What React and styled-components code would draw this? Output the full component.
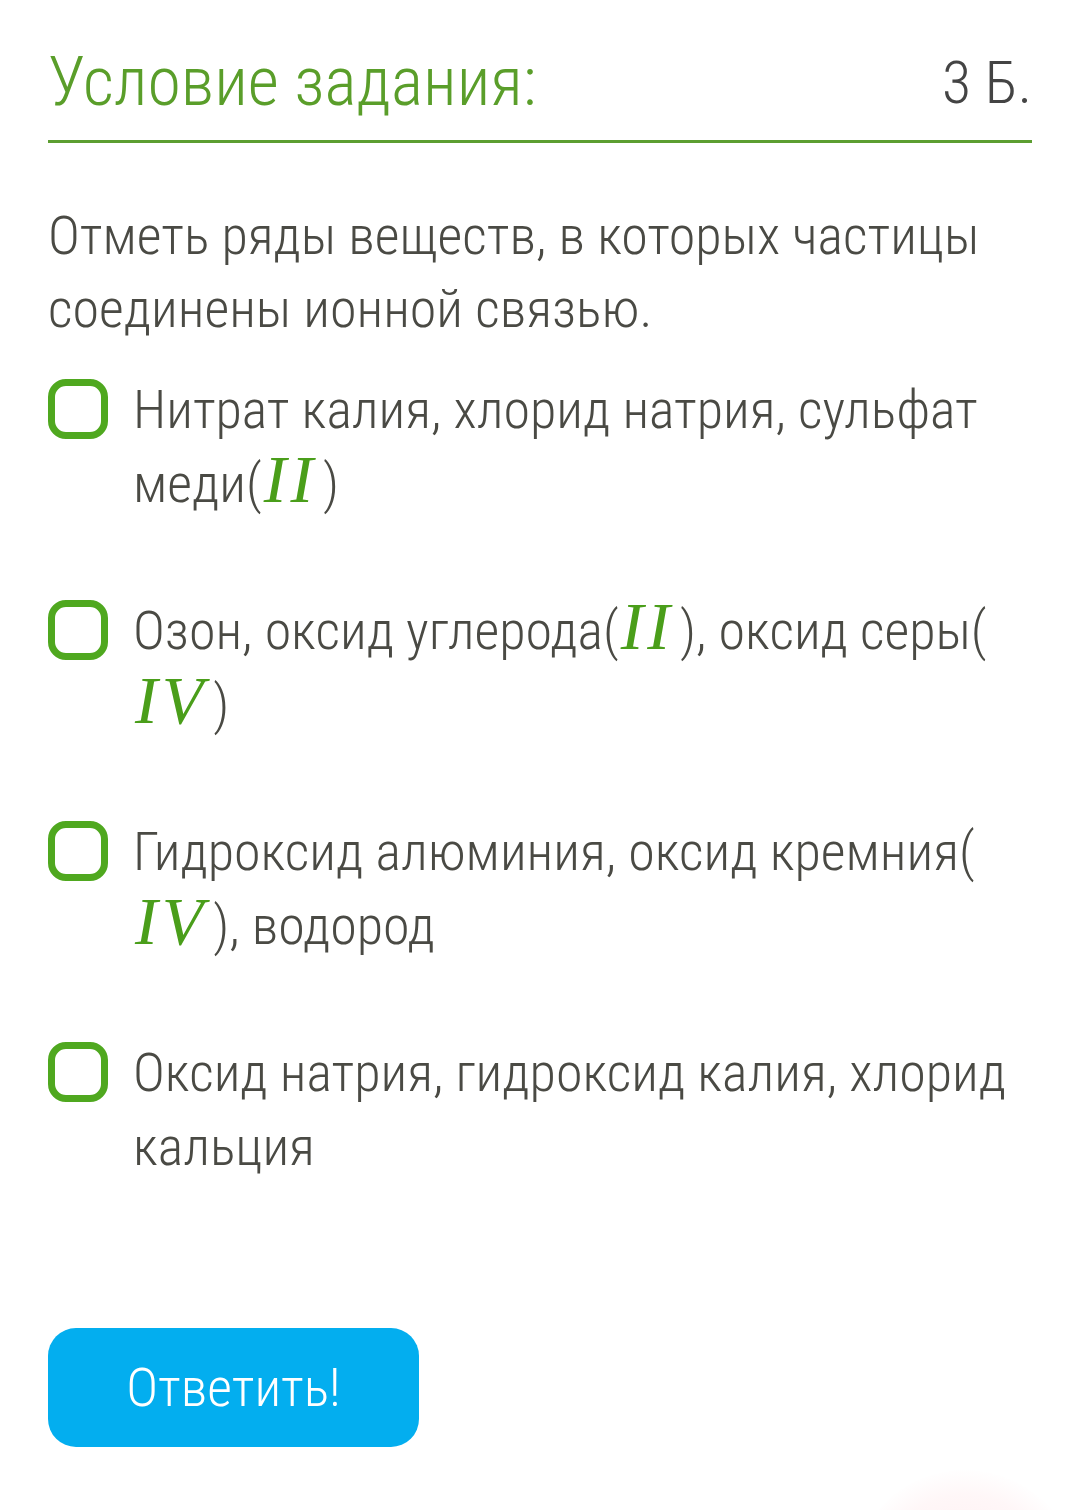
import React, { useState } from 'react';
import styled, { createGlobalStyle } from 'styled-components';

const GlobalStyle = createGlobalStyle`
  html, body {
    margin: 0;
    padding: 0;
    background: #fff;
  }
  body {
    font-family: 'Roboto Condensed', Roboto, 'Liberation Sans Narrow', sans-serif;
    font-weight: 300;
    color: #4a4a44;
    overflow: hidden;
  }
`;

const Page = styled.div`
  position: relative;
  width: 1080px;
  height: 1510px;
  padding: 0 48px;
  box-sizing: border-box;
  overflow: hidden;
`;

const Header = styled.div`
  display: flex;
  justify-content: space-between;
  align-items: center;
  height: 143px;
  padding-top: 24px;
  border-bottom: 3px solid #5c9e31;
  box-sizing: border-box;
`;

const Title = styled.h1`
  margin: 0;
  font-size: 68px;
  font-weight: 300;
  color: #5a9e2a;
`;

const Points = styled.span`
  font-size: 60px;
  color: #444;
`;

const Question = styled.p`
  margin: 56px 0 0;
  font-size: 54px;
  line-height: 73px;
`;

const Options = styled.ul`
  list-style: none;
  margin: 28px 0 0;
  padding: 0;
  display: flex;
  flex-direction: column;
  gap: 73px;
`;

const Option = styled.li`
  display: flex;
  align-items: flex-start;
  gap: 25px;
  cursor: pointer;
`;

const Box = styled.span`
  flex: 0 0 auto;
  width: 60px;
  height: 60px;
  margin-top: 6px;
  box-sizing: border-box;
  border: 7px solid #4fa81f;
  border-radius: 18px;
  background: ${(p) => (p.checked ? '#4fa81f' : '#fff')};
`;

const Label = styled.span`
  font-size: 54px;
  line-height: 74px;
`;

const Roman = styled.i`
  font-family: 'Liberation Serif', 'DejaVu Serif', serif;
  font-style: italic;
  font-weight: 400;
  font-size: 68px;
  line-height: 0;
  color: #4a9e1a;
  letter-spacing: 4px;
  margin-left: 2px;
  margin-right: 6px;
`;

const SubmitButton = styled.button`
  display: block;
  margin-top: 144px;
  width: 371px;
  height: 119px;
  border: none;
  border-radius: 28px;
  background: #03aeef;
  color: #fff;
  font-family: inherit;
  font-weight: 300;
  font-size: 54px;
  cursor: pointer;
`;

const Blob = styled.div`
  position: absolute;
  left: 850px;
  top: 1470px;
  width: 230px;
  height: 230px;
  border-radius: 50%;
  background: radial-gradient(circle, rgba(255, 120, 140, 0.14) 0%, rgba(255, 150, 160, 0.08) 55%, rgba(255, 200, 200, 0) 72%);
`;

const options = [
  ['Нитрат калия, хлорид натрия, сульфат меди(', 'II', ')'],
  ['Озон, оксид углерода(', 'II', '), оксид серы(', 'IV', ')'],
  ['Гидроксид алюминия, оксид кремния(', 'IV', '), водород'],
  ['Оксид натрия, гидроксид калия, хлорид кальция'],
];

function App() {
  const [checked, setChecked] = useState([]);

  const toggle = (i) => {
    setChecked(checked.includes(i) ? checked.filter((x) => x !== i) : [...checked, i]);
  };

  return (
    <Page>
      <GlobalStyle />
      <Header>
        <Title>Условие задания:</Title>
        <Points>3 Б.</Points>
      </Header>
      <Question>Отметь ряды веществ, в которых частицы соединены ионной связью.</Question>
      <Options>
        {options.map((parts, i) => (
          <Option key={i} onClick={() => toggle(i)}>
            <Box checked={checked.includes(i)} />
            <Label>
              {parts.map((part, j) =>
                j % 2 === 1 ? (
                  <React.Fragment key={j}>
                    <wbr />
                    <Roman>{part}</Roman>
                  </React.Fragment>
                ) : (
                  <span key={j}>{part}</span>
                )
              )}
            </Label>
          </Option>
        ))}
      </Options>
      <SubmitButton>Ответить!</SubmitButton>
      <Blob />
    </Page>
  );
}

export default App;
